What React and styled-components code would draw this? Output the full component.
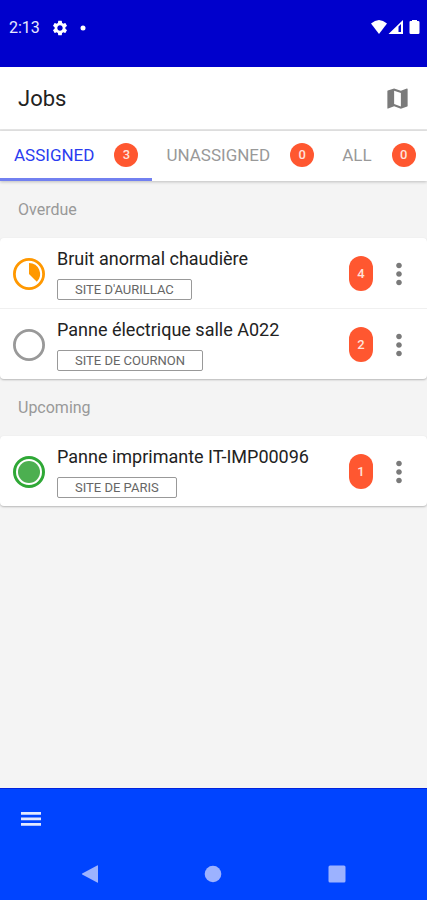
import { MdMap, MdMoreVert, MdSettings } from "react-icons/md";
import styled, { createGlobalStyle } from "styled-components";

const sections = [
  {
    title: "Overdue",
    jobs: [
      {
        name: "Bruit anormal chaudière",
        site: "SITE D'AURILLAC",
        count: 4,
        status: "started",
      },
      {
        name: "Panne électrique salle A022",
        site: "SITE DE COURNON",
        count: 2,
        status: "open",
      },
    ],
  },
  {
    title: "Upcoming",
    jobs: [
      {
        name: "Panne imprimante IT-IMP00096",
        site: "SITE DE PARIS",
        count: 1,
        status: "done",
      },
    ],
  },
];

const tabs = [
  { label: "ASSIGNED", count: 3, active: true },
  { label: "UNASSIGNED", count: 0 },
  { label: "ALL", count: 0 },
];

function StatusIcon({ status }) {
  return (
    <svg width="32" height="32" viewBox="0 0 32 32" aria-hidden="true">
      {status === "started" && (
        <>
          <circle cx="16" cy="16" r="14.6" fill="none" stroke="#ff9800" strokeWidth="2.8" />
          <path d="M16 16V5A11 11 0 0 1 23.8 23.8Z" fill="#ff9800" />
        </>
      )}
      {status === "open" && (
        <circle cx="16" cy="16" r="14.6" fill="none" stroke="#999" strokeWidth="2.8" />
      )}
      {status === "done" && (
        <>
          <circle cx="16" cy="16" r="14.5" fill="#fff" stroke="#2fa836" strokeWidth="3" />
          <circle cx="16" cy="16" r="11" fill="#4caf50" />
        </>
      )}
    </svg>
  );
}

export default function App() {
  return (
    <Page>
      <GlobalStyle />

      {/* ---------- STATUS BAR ---------- */}
      <StatusBar>
        <StatusGroup>
          <span>2:13</span>
          <MdSettings size={18} />
          <svg width="6" height="6" viewBox="0 0 6 6">
            <circle cx="3" cy="3" r="2.5" fill="#fff" />
          </svg>
        </StatusGroup>
        <svg width="50" height="16" viewBox="0 0 50 16" fill="#fff">
          <path d="M1 4.5Q9 -2.5 17 4.5L9 15Z" />
          <path fillRule="evenodd" d="M18.5 15L33 1V15ZM28.5 7.5V13H31V5.1Z" />
          <path d="M40.5 2H42V1H47V2H48.2Q49.5 2 49.5 3.3V13.7Q49.5 15 48.2 15H40.8Q39.5 15 39.5 13.7V3Q39.5 2 40.5 2Z" />
        </svg>
      </StatusBar>

      <Header>
        <h1>Jobs</h1>
        <IconButton aria-label="Map">
          <MdMap size={27} />
        </IconButton>
      </Header>

      {/* ---------- TABS ---------- */}
      <Tabs>
        {tabs.map((tab) => (
          <Tab key={tab.label} $active={tab.active}>
            {tab.label}
            <Badge>{tab.count}</Badge>
          </Tab>
        ))}
      </Tabs>

      {/* ---------- JOB LIST ---------- */}
      <Main>
        {sections.map((section) => (
          <section key={section.title}>
            <SectionTitle>{section.title}</SectionTitle>
            <JobList>
              {section.jobs.map((job) => (
                <Job key={job.name}>
                  <StatusIcon status={job.status} />
                  <JobInfo>
                    <JobName>{job.name}</JobName>
                    <Site>{job.site}</Site>
                  </JobInfo>
                  <JobActions>
                    <Badge $tall>{job.count}</Badge>
                    <IconButton aria-label="More">
                      <MdMoreVert size={34} />
                    </IconButton>
                  </JobActions>
                </Job>
              ))}
            </JobList>
          </section>
        ))}
      </Main>

      {/* ---------- BOTTOM BAR ---------- */}
      <Footer>
        <MenuBar>
          <IconButton aria-label="Menu" $light>
            <svg width="20" height="14" viewBox="0 0 20 14" fill="currentColor">
              <path d="M0 0H20V2.8H0ZM0 5.5H20V8.3H0ZM0 11H20V13.8H0Z" />
            </svg>
          </IconButton>
        </MenuBar>
        <SystemNav>
          <NavButton aria-label="Back">
            <svg width="18" height="18" viewBox="0 0 18 18">
              <path d="M17 0.8V17.2Q17 18 16.2 17.6L1.2 9.6Q0.5 9 1.2 8.4L16.2 0.4Q17 0 17 0.8Z" />
            </svg>
          </NavButton>
          <NavButton aria-label="Home">
            <svg width="18" height="18" viewBox="0 0 18 18">
              <circle cx="9" cy="9" r="8.3" />
            </svg>
          </NavButton>
          <NavButton aria-label="Recent apps">
            <svg width="18" height="18" viewBox="0 0 18 18">
              <rect x="0.5" y="0.5" width="17" height="17" rx="1.5" />
            </svg>
          </NavButton>
        </SystemNav>
      </Footer>
    </Page>
  );
}

const GlobalStyle = createGlobalStyle`
  * {
    box-sizing: border-box;
  }

  body {
    margin: 0;
    background-color: #f4f4f4;
    font-family: Roboto, "Liberation Sans", sans-serif;
  }

  button {
    font-family: inherit;
    border: none;
    background: none;
    padding: 0;
    cursor: pointer;
  }

  svg {
    display: block;
    flex-shrink: 0;
  }
`;

const Page = styled.div`
  display: flex;
  flex-direction: column;
  min-height: 100vh;
`;

const StatusBar = styled.div`
  display: flex;
  justify-content: space-between;
  align-items: flex-start;
  height: 67px;
  padding: 19px 7px 0 9px;
  background-color: #0000cc;
  color: #fff;
`;

const StatusGroup = styled.div`
  display: flex;
  align-items: center;
  gap: 11px;
  font-size: 16px;
  font-weight: 400;
  line-height: 18px;
  color: #e8e8ff;

  svg {
    color: #fff;
  }
`;

const Header = styled.header`
  display: flex;
  justify-content: space-between;
  align-items: center;
  height: 64px;
  padding: 0 16px 0 18px;
  background-color: #fff;
  border-bottom: 2px solid #e6e6e6;

  h1 {
    margin: 0;
    font-size: 22px;
    font-weight: 400;
    color: #222;
  }
`;

const IconButton = styled.button`
  display: flex;
  justify-content: center;
  align-items: center;
  color: ${(props) => (props.$light ? "#e3e9ff" : "#7a7a7a")};
`;

const Tabs = styled.nav`
  display: flex;
  height: 50px;
  background-color: #fff;
  box-shadow: 0 1px 3px rgba(0, 0, 0, 0.22);
`;

const Tab = styled.button`
  display: flex;
  align-items: center;
  gap: 20px;
  padding: 0 14px;
  border-bottom: 3px solid ${(props) => (props.$active ? "#7280f0" : "transparent")};
  font-size: 17px;
  color: ${(props) => (props.$active ? "#2a3cf0" : "#999")};
`;

const Badge = styled.span`
  display: flex;
  justify-content: center;
  align-items: center;
  flex-shrink: 0;
  width: 24px;
  height: ${(props) => (props.$tall ? "35px" : "24px")};
  border-radius: 12px;
  background-color: #ff5730;
  font-size: 13px;
  font-weight: 500;
  color: #ffe3dc;
`;

const Main = styled.main`
  flex: 1;
`;

const SectionTitle = styled.h2`
  margin: 0;
  padding: 0 18px;
  font-size: 16px;
  font-weight: 400;
  line-height: 57px;
  color: #999;
`;

const JobList = styled.ul`
  margin: 0;
  padding: 0;
  list-style: none;
  background-color: #fff;
  border-radius: 4px;
  box-shadow: 0 1px 2px rgba(0, 0, 0, 0.25);
`;

const Job = styled.li`
  display: flex;
  align-items: center;
  padding: 9px 11px 8px 13px;

  & + & {
    border-top: 1px solid #f0f0f0;
  }
`;

const JobInfo = styled.div`
  flex: 1;
  min-width: 0;
  padding: 0 12px;
`;

const JobName = styled.p`
  margin: 0 0 8px;
  font-size: 18px;
  line-height: 24px;
  color: #222;
`;

const Site = styled.span`
  display: block;
  width: fit-content;
  padding: 0 17px;
  border: 1px solid #999;
  border-radius: 2px;
  font-size: 13px;
  line-height: 19px;
  color: #666;
`;

const JobActions = styled.div`
  display: flex;
  align-items: center;
  gap: 9px;
`;

const Footer = styled.footer`
  background-color: #0044ff;
  border-top: 1px solid #0022dd;
`;

const MenuBar = styled.div`
  display: flex;
  align-items: center;
  height: 59px;
  padding: 0 21px;
`;

const SystemNav = styled.nav`
  display: grid;
  grid-template-columns: repeat(3, 1fr);
  align-items: center;
  height: 52px;
  padding: 0 28px;
`;

const NavButton = styled.button`
  display: flex;
  justify-content: center;

  svg {
    fill: #9cb2ff;
  }
`;
